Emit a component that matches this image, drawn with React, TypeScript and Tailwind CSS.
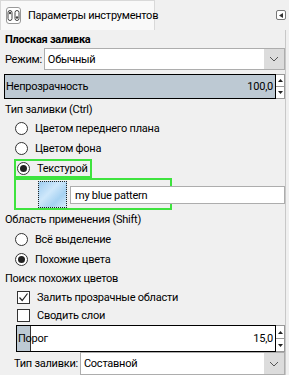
import React from 'react';

const font = { fontFamily: 'Roboto, "Noto Sans", sans-serif' };

function Radio({ checked }: { checked?: boolean }) {
  return (
    <span className="w-[13px] h-[13px] rounded-full border border-[#333] bg-white flex items-center justify-center shrink-0">
      {checked && <span className="w-[7px] h-[7px] rounded-full bg-[#222]" />}
    </span>
  );
}

function Check({ checked }: { checked?: boolean }) {
  return (
    <span className="w-[13px] h-[13px] border border-[#333] bg-white flex items-center justify-center shrink-0">
      {checked && (
        <svg width="11" height="11" viewBox="0 0 11 11">
          <path d="M1.5 5.5 L4.2 8.5 L9.5 1.5" fill="none" stroke="#222" strokeWidth="1.2" />
        </svg>
      )}
    </span>
  );
}

function Chevron() {
  return (
    <div className="w-[20px] h-full bg-[#dcdcdc] flex items-center justify-center">
      <svg width="10" height="6" viewBox="0 0 10 6">
        <path d="M1 1 L5 5 L9 1" fill="none" stroke="#555" strokeWidth="1" />
      </svg>
    </div>
  );
}

function Spin() {
  return (
    <div className="w-[9px] h-full flex flex-col border border-l-0 border-[#999] bg-white">
      <div className="flex-1 flex items-center justify-center border-b border-[#999]">
        <svg width="5" height="3" viewBox="0 0 5 3"><path d="M0 3 L2.5 0 L5 3Z" fill="#222" /></svg>
      </div>
      <div className="flex-1 flex items-center justify-center">
        <svg width="5" height="3" viewBox="0 0 5 3"><path d="M0 0 L2.5 3 L5 0Z" fill="#222" /></svg>
      </div>
    </div>
  );
}

export default function App() {
  return (
    <div style={font} className="w-[289px] h-[375px] bg-[#f0f0f0] overflow-hidden text-[11px] tracking-[-0.25px] leading-none text-black">
      {/* tab bar */}
      <div className="h-[30px] flex items-end justify-between">
        <div className="w-[155px] h-[30px] bg-[#f9f9f9] border-t border-l border-r border-[#d9d9d9] flex items-center gap-[7px] pl-[5px]">
          <span className="w-[17px] h-[17px] border border-[#999] rounded-[3px] bg-white flex items-center justify-center">
            <svg width="13" height="11" viewBox="0 0 13 11">
              <rect x="1" y="0.5" width="4" height="10" rx="2" fill="none" stroke="#444" />
              <rect x="8" y="0.5" width="4" height="10" rx="2" fill="none" stroke="#444" />
              <circle cx="3" cy="3" r="1.2" fill="#444" />
              <circle cx="10" cy="7.5" r="1.2" fill="#444" />
            </svg>
          </span>
          <span className="whitespace-nowrap">Параметры инструментов</span>
        </div>
        <div className="self-center mr-[3px] w-[10px] h-[10px] border border-[#777] rounded-[2px] bg-white flex items-center justify-center">
          <svg width="4" height="5" viewBox="0 0 4 5"><path d="M4 0 L0 2.5 L4 5Z" fill="#333" /></svg>
        </div>
      </div>

      {/* panel */}
      <div className="h-[345px] bg-[#f0f0f0] border-r border-[#c8c8c8] mr-[3px] pl-[4px] flex flex-col">
        <div className="h-[18px] flex items-center pl-[1px] font-bold">Плоская заливка</div>

        <div className="h-[22px] flex items-center">
          <span className="pl-[1px] pr-[2px] whitespace-nowrap">Режим:</span>
          <div className="flex-1 h-[22px] bg-white border border-[#adadad] flex items-center">
            <span className="flex-1 pl-[3px]">Обычный</span>
            <Chevron />
          </div>
        </div>

        <div className="mt-[4px] h-[25px] flex">
          <div className="flex-1 bg-[#bdc9d3] border border-black flex items-center justify-between px-[1px]">
            <span>Непрозрачность</span>
            <span className="pr-[1px]">100,0</span>
          </div>
          <Spin />
        </div>

        <div className="h-[18px] flex items-center pl-[1px] mt-[1px]">Тип заливки (Ctrl)</div>
        <div className="h-[20px] flex items-center gap-[7px] pl-[11px]"><Radio /><span>Цветом переднего плана</span></div>
        <div className="h-[20px] flex items-center gap-[7px] pl-[11px]"><Radio /><span>Цветом фона</span></div>
        <div className="h-[20px] flex items-center pl-[10px]">
          <div className="h-[19px] w-[78px] border-2 border-[#3ee33e] flex items-center gap-[7px] pl-[1px]">
            <Radio checked /><span>Текстурой</span>
          </div>
        </div>
        <div className="h-[32px] flex items-center pl-[10px] relative">
          <div className="h-[32px] w-[158px] border-2 border-[#3ee33e]" />
          <div className="absolute left-[34px] top-[3px] w-[29px] h-[27px] border border-dotted border-[#222] bg-[linear-gradient(135deg,#9fcdf0,#cfe8fb_40%,#a6d2f2_70%,#d6ecfc)]" />
          <div className="absolute left-[66px] right-0 top-[8px] h-[18px] bg-white border border-[#adadad] flex items-center pl-[4px]">
            my blue pattern
          </div>
        </div>

        <div className="h-[19px] flex items-center pl-[1px]">Область применения (Shift)</div>
        <div className="h-[20px] flex items-center gap-[7px] pl-[11px]"><Radio /><span>Всё выделение</span></div>
        <div className="h-[20px] flex items-center gap-[7px] pl-[11px]"><Radio checked /><span>Похожие цвета</span></div>
        <div className="h-[19px] flex items-center pl-[1px]">Поиск похожих цветов</div>
        <div className="h-[18px] flex items-center gap-[7px] pl-[13px]"><Check checked /><span>Залить прозрачные области</span></div>
        <div className="h-[18px] flex items-center gap-[7px] pl-[13px]"><Check /><span>Сводить слои</span></div>

        <div className="mt-[1px] h-[27px] flex pl-[12px]">
          <div className="flex-1 bg-white border border-black flex items-center relative">
            <div className="w-[14px] h-full bg-[#bdc9d3] border-r border-[#333]" />
            <span className="absolute left-[1px]">Порог</span>
            <span className="ml-auto pr-[2px]">15,0</span>
          </div>
          <Spin />
        </div>

        <div className="h-[23px] flex items-center pl-[10px]">
          <span className="pr-[2px] whitespace-nowrap">Тип заливки:</span>
          <div className="flex-1 h-[23px] bg-white border border-[#adadad] flex items-center">
            <span className="flex-1 pl-[3px]">Составной</span>
            <Chevron />
          </div>
        </div>
      </div>
    </div>
  );
}
